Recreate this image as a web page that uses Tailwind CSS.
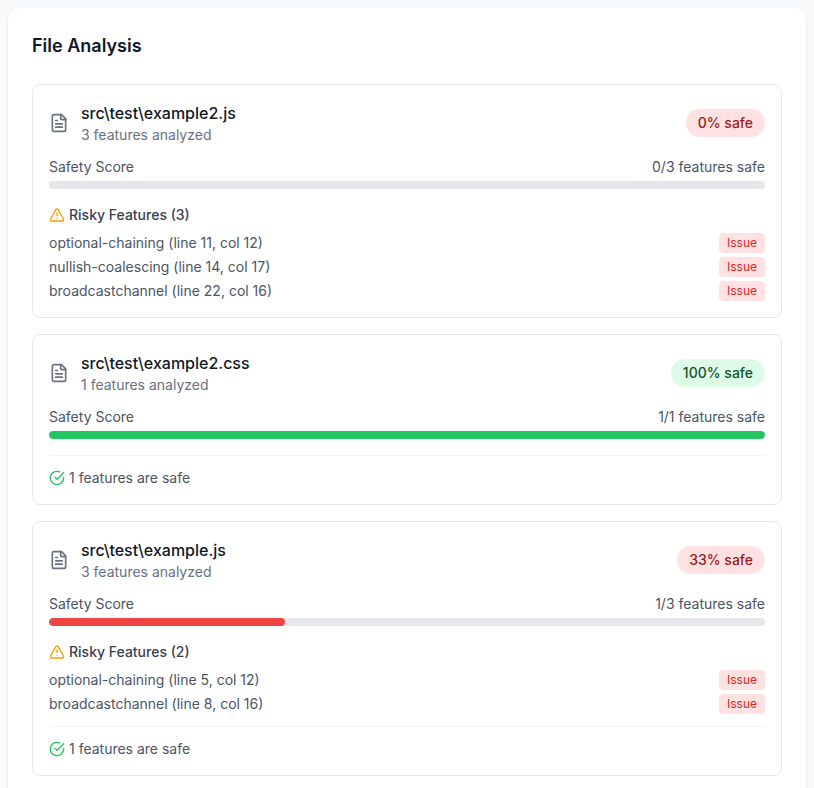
<!DOCTYPE html>
<html lang="en">
<head>
  <title>File Analysis</title>
  <meta charset="utf-8">
  <meta name="viewport" content="width=device-width, initial-scale=1">
  <script src="https://cdn.jsdelivr.net/npm/@tailwindcss/browser@4"></script>
</head>

<body class="bg-[#f9fafb] font-['Inter',sans-serif]">
  <div class="h-[788px] overflow-hidden p-2">
    <div class="bg-white rounded-xl p-6 shadow-sm">
      <h2 class="text-lg font-semibold text-[#111827] mb-6">File Analysis</h2>

      <div class="flex flex-col gap-4">
        <!-- example2.js -->
        <div class="border border-[#e5e7eb] rounded-lg p-4">
          <div class="flex items-center justify-between mb-3">
            <div class="flex items-center gap-3">
              <svg class="w-5 h-5 text-[#6b7280]" viewBox="0 0 24 24" fill="none" stroke="currentColor" stroke-width="2" stroke-linecap="round" stroke-linejoin="round"><path d="M15 2H6a2 2 0 0 0-2 2v16a2 2 0 0 0 2 2h12a2 2 0 0 0 2-2V7Z"/><path d="M14 2v4a2 2 0 0 0 2 2h4"/><path d="M10 9H8"/><path d="M16 13H8"/><path d="M16 17H8"/></svg>
              <div>
                <div class="font-medium text-[#111827]">src\test\example2.js</div>
                <div class="text-sm text-[#6b7280]">3 features analyzed</div>
              </div>
            </div>
            <span class="px-3 py-1 rounded-full text-sm font-medium bg-[#fee2e2] text-[#991b1b]">0% safe</span>
          </div>
          <div class="flex justify-between text-sm text-[#4b5563] mb-1">
            <span>Safety Score</span>
            <span>0/3 features safe</span>
          </div>
          <div class="h-2 rounded-full bg-[#e5e7eb]"></div>
          <div class="mt-4">
            <div class="flex items-center gap-1 text-sm font-medium text-[#374151] mb-2">
              <svg class="w-4 h-4 text-[#f59e0b]" viewBox="0 0 24 24" fill="none" stroke="currentColor" stroke-width="2" stroke-linecap="round" stroke-linejoin="round"><path d="m21.73 18-8-14a2 2 0 0 0-3.48 0l-8 14A2 2 0 0 0 4 21h16a2 2 0 0 0 1.73-3Z"/><path d="M12 9v4"/><path d="M12 17h.01"/></svg>
              <span>Risky Features (3)</span>
            </div>
            <div class="flex flex-col gap-1">
              <div class="flex items-center justify-between text-sm text-[#4b5563]">
                <span>optional-chaining (line 11, col 12)</span>
                <span class="px-2 rounded text-xs leading-5 bg-[#fee2e2] text-[#dc2626]">Issue</span>
              </div>
              <div class="flex items-center justify-between text-sm text-[#4b5563]">
                <span>nullish-coalescing (line 14, col 17)</span>
                <span class="px-2 rounded text-xs leading-5 bg-[#fee2e2] text-[#dc2626]">Issue</span>
              </div>
              <div class="flex items-center justify-between text-sm text-[#4b5563]">
                <span>broadcastchannel (line 22, col 16)</span>
                <span class="px-2 rounded text-xs leading-5 bg-[#fee2e2] text-[#dc2626]">Issue</span>
              </div>
            </div>
          </div>
        </div>

        <!-- example2.css -->
        <div class="border border-[#e5e7eb] rounded-lg p-4">
          <div class="flex items-center justify-between mb-3">
            <div class="flex items-center gap-3">
              <svg class="w-5 h-5 text-[#6b7280]" viewBox="0 0 24 24" fill="none" stroke="currentColor" stroke-width="2" stroke-linecap="round" stroke-linejoin="round"><path d="M15 2H6a2 2 0 0 0-2 2v16a2 2 0 0 0 2 2h12a2 2 0 0 0 2-2V7Z"/><path d="M14 2v4a2 2 0 0 0 2 2h4"/><path d="M10 9H8"/><path d="M16 13H8"/><path d="M16 17H8"/></svg>
              <div>
                <div class="font-medium text-[#111827]">src\test\example2.css</div>
                <div class="text-sm text-[#6b7280]">1 features analyzed</div>
              </div>
            </div>
            <span class="px-3 py-1 rounded-full text-sm font-medium bg-[#dcfce7] text-[#14532d]">100% safe</span>
          </div>
          <div class="flex justify-between text-sm text-[#4b5563] mb-1">
            <span>Safety Score</span>
            <span>1/1 features safe</span>
          </div>
          <div class="h-2 rounded-full bg-[#e5e7eb] overflow-hidden">
            <div class="h-full rounded-full bg-[#22c55e]" style="width: 100%"></div>
          </div>
          <div class="mt-4 pt-3 border-t border-[#f3f4f6] flex items-center gap-1 text-sm text-[#4b5563]">
            <svg class="w-4 h-4 text-[#22c55e]" viewBox="0 0 24 24" fill="none" stroke="currentColor" stroke-width="2" stroke-linecap="round" stroke-linejoin="round"><path d="M22 11.08V12a10 10 0 1 1-5.93-9.14"/><path d="m9 11 3 3L22 4"/></svg>
            <span>1 features are safe</span>
          </div>
        </div>

        <!-- example.js -->
        <div class="border border-[#e5e7eb] rounded-lg p-4">
          <div class="flex items-center justify-between mb-3">
            <div class="flex items-center gap-3">
              <svg class="w-5 h-5 text-[#6b7280]" viewBox="0 0 24 24" fill="none" stroke="currentColor" stroke-width="2" stroke-linecap="round" stroke-linejoin="round"><path d="M15 2H6a2 2 0 0 0-2 2v16a2 2 0 0 0 2 2h12a2 2 0 0 0 2-2V7Z"/><path d="M14 2v4a2 2 0 0 0 2 2h4"/><path d="M10 9H8"/><path d="M16 13H8"/><path d="M16 17H8"/></svg>
              <div>
                <div class="font-medium text-[#111827]">src\test\example.js</div>
                <div class="text-sm text-[#6b7280]">3 features analyzed</div>
              </div>
            </div>
            <span class="px-3 py-1 rounded-full text-sm font-medium bg-[#fee2e2] text-[#991b1b]">33% safe</span>
          </div>
          <div class="flex justify-between text-sm text-[#4b5563] mb-1">
            <span>Safety Score</span>
            <span>1/3 features safe</span>
          </div>
          <div class="h-2 rounded-full bg-[#e5e7eb] overflow-hidden">
            <div class="h-full rounded-full bg-[#ef4444]" style="width: 33%"></div>
          </div>
          <div class="mt-4">
            <div class="flex items-center gap-1 text-sm font-medium text-[#374151] mb-2">
              <svg class="w-4 h-4 text-[#f59e0b]" viewBox="0 0 24 24" fill="none" stroke="currentColor" stroke-width="2" stroke-linecap="round" stroke-linejoin="round"><path d="m21.73 18-8-14a2 2 0 0 0-3.48 0l-8 14A2 2 0 0 0 4 21h16a2 2 0 0 0 1.73-3Z"/><path d="M12 9v4"/><path d="M12 17h.01"/></svg>
              <span>Risky Features (2)</span>
            </div>
            <div class="flex flex-col gap-1">
              <div class="flex items-center justify-between text-sm text-[#4b5563]">
                <span>optional-chaining (line 5, col 12)</span>
                <span class="px-2 rounded text-xs leading-5 bg-[#fee2e2] text-[#dc2626]">Issue</span>
              </div>
              <div class="flex items-center justify-between text-sm text-[#4b5563]">
                <span>broadcastchannel (line 8, col 16)</span>
                <span class="px-2 rounded text-xs leading-5 bg-[#fee2e2] text-[#dc2626]">Issue</span>
              </div>
            </div>
          </div>
          <div class="mt-3 pt-3 border-t border-[#f3f4f6] flex items-center gap-1 text-sm text-[#4b5563]">
            <svg class="w-4 h-4 text-[#22c55e]" viewBox="0 0 24 24" fill="none" stroke="currentColor" stroke-width="2" stroke-linecap="round" stroke-linejoin="round"><path d="M22 11.08V12a10 10 0 1 1-5.93-9.14"/><path d="m9 11 3 3L22 4"/></svg>
            <span>1 features are safe</span>
          </div>
        </div>
      </div>
    </div>
  </div>
</body>
</html>
